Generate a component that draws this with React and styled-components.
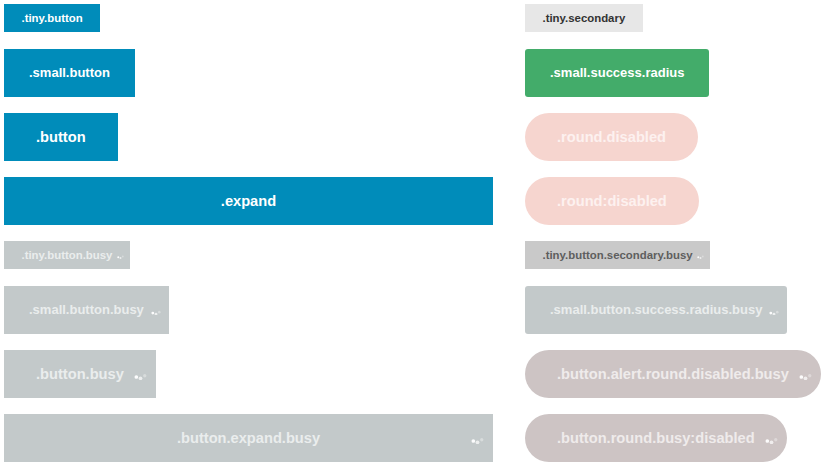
import React from 'react';
import styled, {createGlobalStyle, css} from 'styled-components';

const GlobalStyle = createGlobalStyle`
  html, body {
    margin: 0;
    padding: 0;
    background: #ffffff;
  }
  body {
    font-family: "Liberation Sans", Arial, Helvetica, sans-serif;
  }
`;

const SIZES = {
  tiny: {font: 11.4, height: 28, pad: 17.5, dot: 7, right: 6},
  small: {font: 13, height: 48, pad: 25, dot: 10, right: 8},
  normal: {font: 14.65, height: 48, pad: 32, dot: 13, right: 9},
};

const TONES = {
  primary: {bg: '#008cba', fg: '#ffffff'},
  secondary: {bg: '#e7e7e7', fg: '#333333'},
  success: {bg: '#43ac6a', fg: '#ffffff'},
  alertDisabled: {bg: '#f6d5cf', fg: '#fdf1ef'},
  busy: {bg: '#c3c9ca', fg: '#eaeded'},
  busySecondary: {bg: '#c9c9c9', fg: '#5e5e5e'},
  busyAlert: {bg: '#cdc4c4', fg: '#efebeb'},
};

const Page = styled.div`
  display: grid;
  grid-template-columns: 489px 1fr;
  column-gap: 32px;
  padding: 4px;
`;

const Column = styled.div`
  display: flex;
  flex-direction: column;
  align-items: flex-start;
  gap: 16px;
`;

const Button = styled.a`
  position: relative;
  display: block;
  box-sizing: border-box;
  height: ${p => SIZES[p.$size].height}px;
  line-height: ${p => SIZES[p.$size].height}px;
  padding: 0 ${p => SIZES[p.$size].pad}px;
  margin-bottom: ${p => (p.$size === 'tiny' ? 1 : 0)}px;
  font-size: ${p => SIZES[p.$size].font}px;
  font-weight: bold;
  text-align: center;
  white-space: nowrap;
  background: ${p => TONES[p.$tone].bg};
  color: ${p => TONES[p.$tone].fg};
  border-radius: ${p => (p.$round ? '1000px' : p.$radius ? '3px' : '0')};
  ${p =>
    p.$expand &&
    css`
      align-self: stretch;
    `}
`;

const Spinner = styled.svg`
  position: absolute;
  right: ${p => SIZES[p.$size].right}px;
  top: 50%;
  margin-top: ${p => -SIZES[p.$size].dot * 0.29 + 2.5}px;
  width: ${p => SIZES[p.$size].dot}px;
  height: ${p => SIZES[p.$size].dot * 0.57}px;
`;

function Busy({size}) {
  return (
    <Spinner $size={size} viewBox="0 0 14 8">
      <circle cx="2.5" cy="4.3" r="2" fill="#ffffff" opacity="0.95" />
      <circle cx="7" cy="5.8" r="2" fill="#ffffff" opacity="0.7" />
      <circle cx="11.6" cy="3" r="1.8" fill="#ffffff" opacity="0.35" />
    </Spinner>
  );
}

function Btn({label, size = 'normal', tone = 'primary', busy, ...rest}) {
  return (
    <Button $size={size} $tone={tone} {...rest}>
      {label}
      {busy && <Busy size={size} />}
    </Button>
  );
}

export default function App() {
  return (
    <>
      <GlobalStyle />
      <Page>
        <Column>
          <Btn label=".tiny.button" size="tiny" />
          <Btn label=".small.button" size="small" />
          <Btn label=".button" />
          <Btn label=".expand" $expand />
          <Btn label=".tiny.button.busy" size="tiny" tone="busy" busy />
          <Btn label=".small.button.busy" size="small" tone="busy" busy />
          <Btn label=".button.busy" tone="busy" busy />
          <Btn label=".button.expand.busy" tone="busy" busy $expand />
        </Column>
        <Column>
          <Btn label=".tiny.secondary" size="tiny" tone="secondary" />
          <Btn label=".small.success.radius" size="small" tone="success" $radius />
          <Btn label=".round.disabled" tone="alertDisabled" $round />
          <Btn label=".round:disabled" tone="alertDisabled" $round />
          <Btn label=".tiny.button.secondary.busy" size="tiny" tone="busySecondary" busy />
          <Btn label=".small.button.success.radius.busy" size="small" tone="busy" busy $radius />
          <Btn label=".button.alert.round.disabled.busy" tone="busyAlert" busy $round />
          <Btn label=".button.round.busy:disabled" tone="busyAlert" busy $round />
        </Column>
      </Page>
    </>
  );
}
